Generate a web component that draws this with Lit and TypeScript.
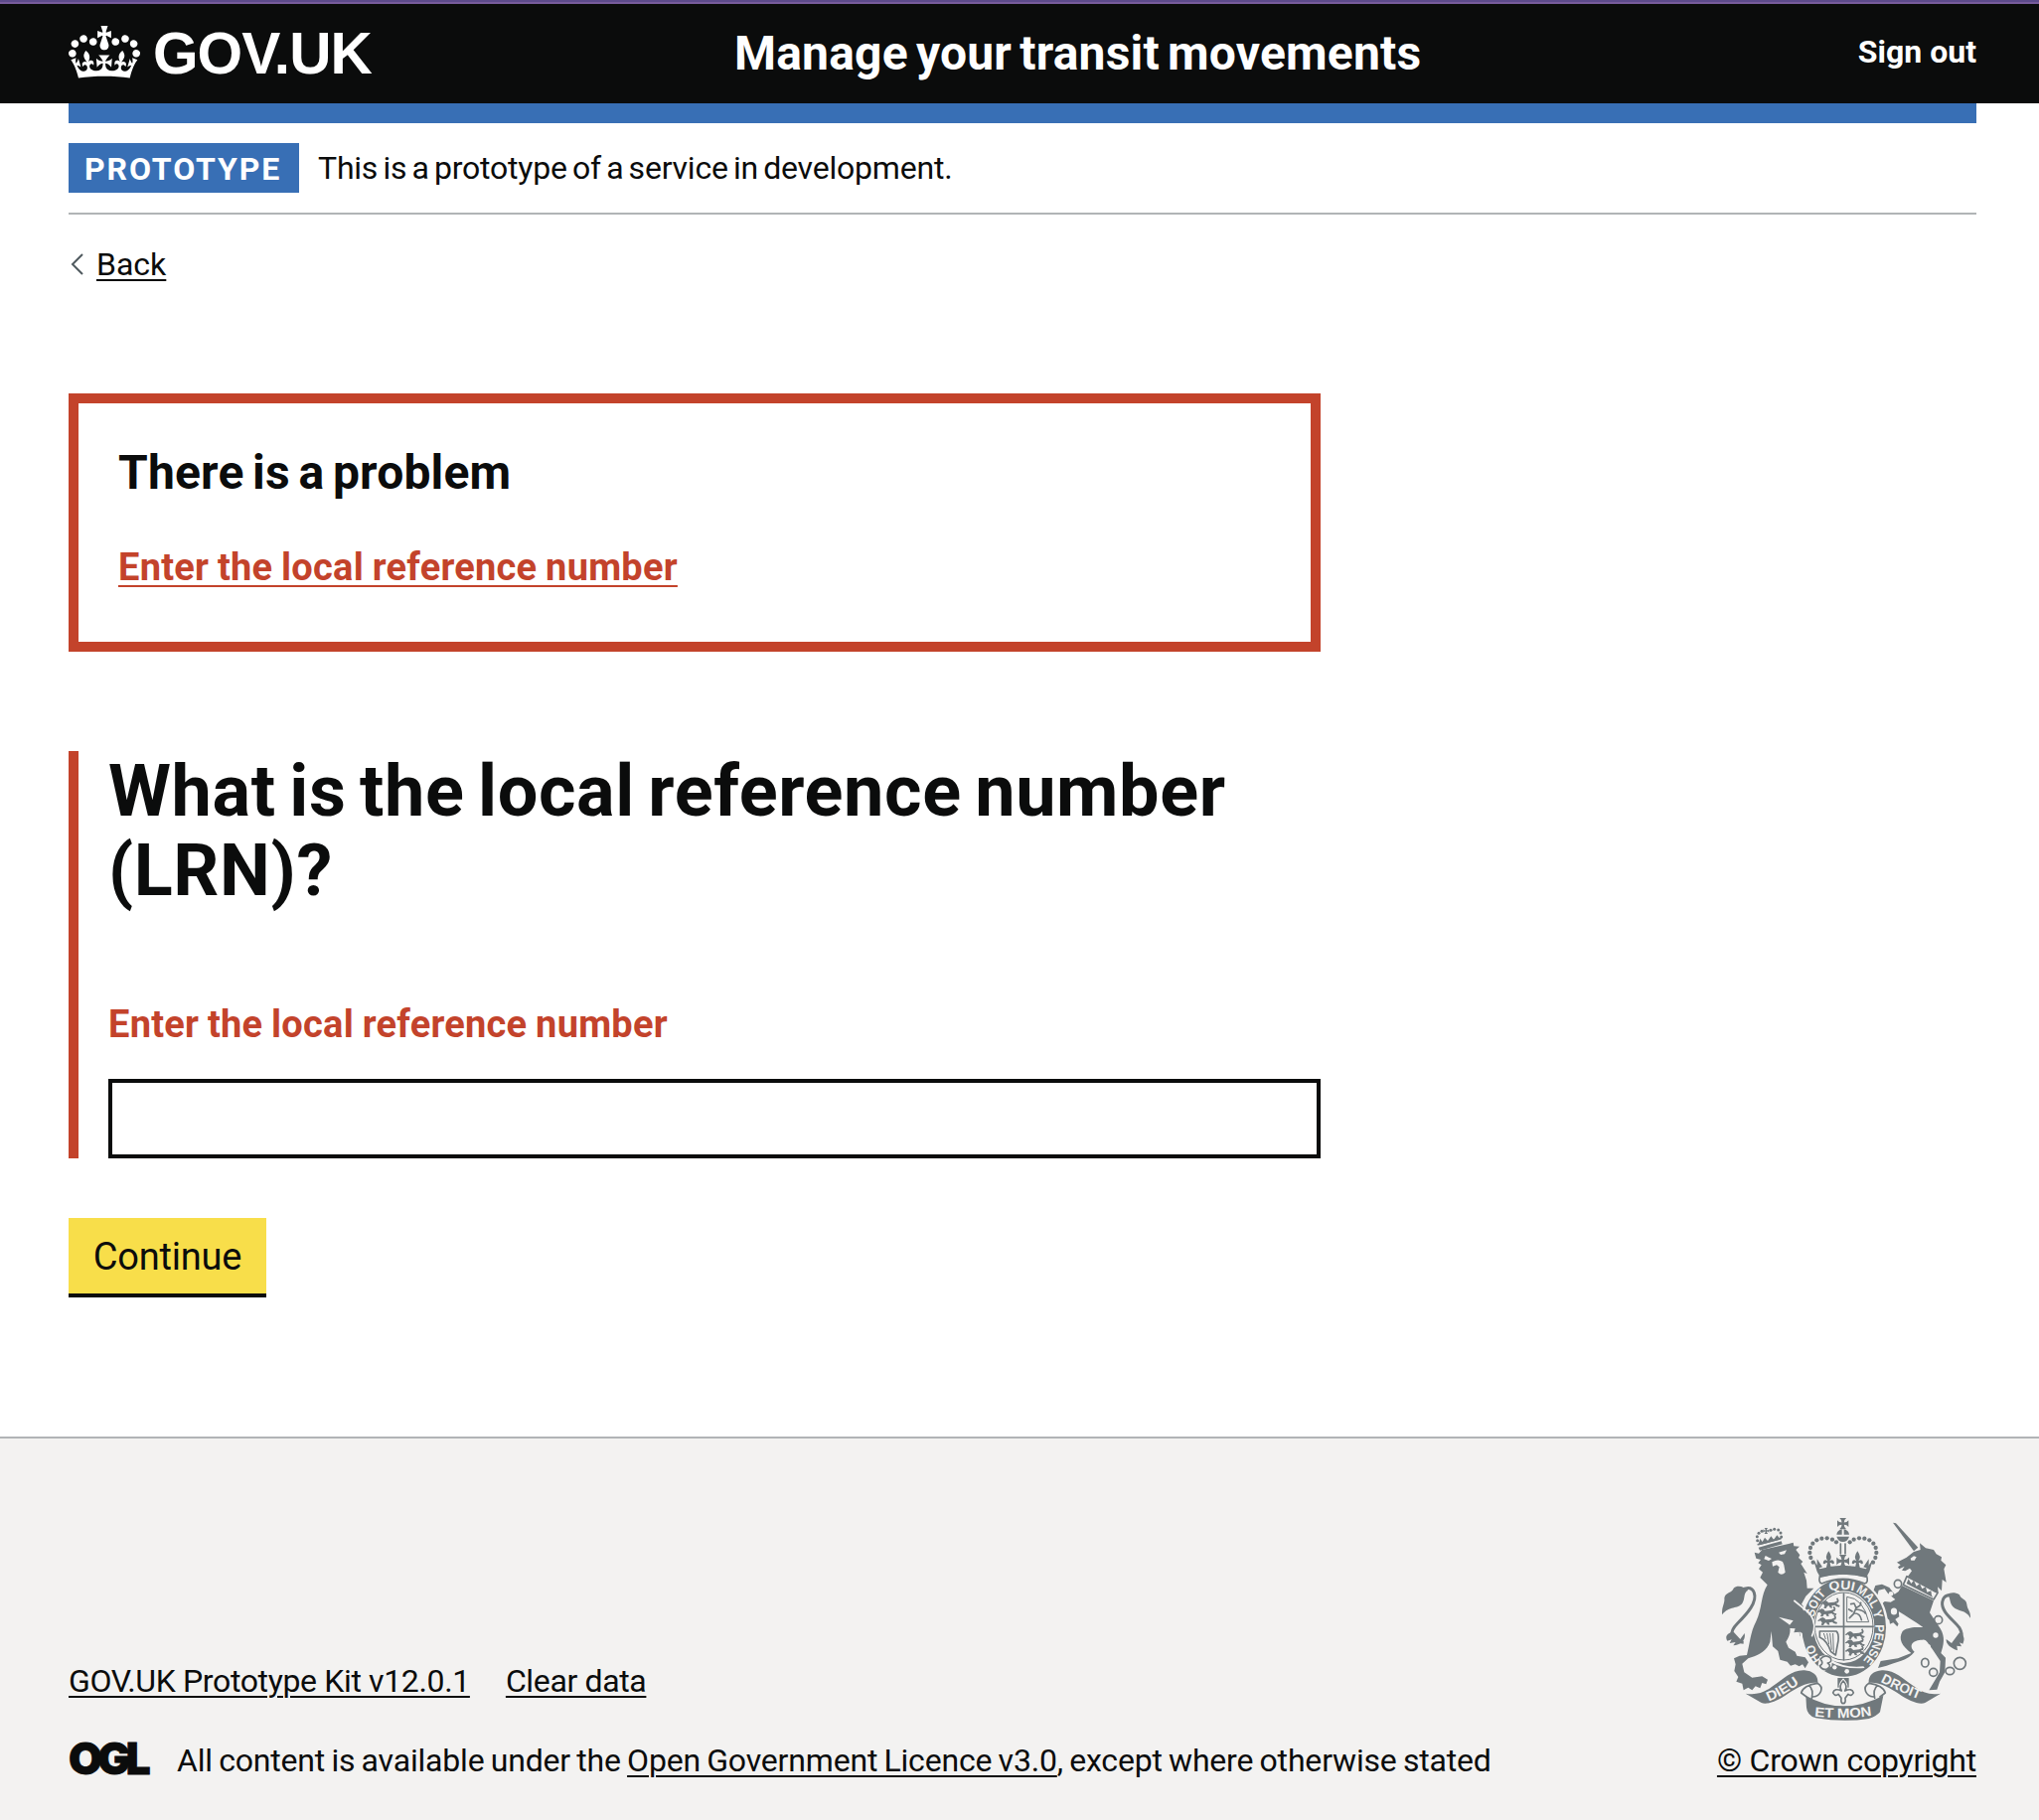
import { LitElement, html, css, svg } from "lit";
import { customElement } from "lit/decorators.js";

const CROWN =
  "M25 30.2c3.5 1.5 7.7-.2 9.1-3.7 1.5-3.6-.2-7.8-3.9-9.2-3.6-1.4-7.6.3-9.1 3.9-1.4 3.5.3 7.5 3.9 9zM9 39.5c3.6 1.5 7.8-.2 9.2-3.7 1.5-3.6-.2-7.8-3.9-9.1-3.6-1.5-7.6.2-9.1 3.8-1.4 3.5.3 7.5 3.8 9zM4.4 57.2c3.5 1.5 7.7-.2 9.1-3.8 1.5-3.6-.2-7.7-3.9-9.1-3.5-1.5-7.6.3-9.1 3.8-1.4 3.5.3 7.6 3.9 9.1zm38.3-21.4c3.5 1.5 7.7-.2 9.1-3.8 1.5-3.6-.2-7.7-3.9-9.1-3.6-1.5-7.6.3-9.1 3.8-1.3 3.6.4 7.7 3.9 9.1zm64.4-5.6c-3.6 1.5-7.8-.2-9.1-3.7-1.5-3.6.2-7.8 3.8-9.2 3.6-1.4 7.7.3 9.2 3.9 1.3 3.5-.4 7.5-3.9 9zm15.9 9.3c-3.6 1.5-7.7-.2-9.1-3.7-1.5-3.6.2-7.8 3.7-9.1 3.6-1.5 7.7.2 9.2 3.8 1.5 3.5-.3 7.5-3.8 9zm4.7 17.7c-3.6 1.5-7.8-.2-9.2-3.8-1.5-3.6.2-7.7 3.9-9.1 3.6-1.5 7.7.3 9.2 3.8 1.3 3.5-.4 7.6-3.9 9.1zM89.3 35.8c-3.6 1.5-7.8-.2-9.2-3.8-1.4-3.6.2-7.7 3.9-9.1 3.6-1.5 7.7.3 9.2 3.8 1.4 3.6-.3 7.7-3.9 9.1zM69.7 17.7l8.9 4.7V9.3l-8.9 2.8c-.2-.3-.5-.6-.9-.9L72.4 0H59.6l3.5 11.2c-.3.3-.6.5-.9.9l-8.8-2.8v13.1l8.8-4.7c.3.3.6.7.9.9l-5 15.4v.1c-.2.8-.4 1.6-.4 2.4 0 4.1 3.1 7.5 7 8.1h.2c.3 0 .7.1 1 .1.4 0 .7 0 1-.1h.2c4-.6 7.1-4.1 7.1-8.1 0-.8-.1-1.7-.4-2.4V34l-5.1-15.4c.4-.2.7-.6 1-.9zM66 92.8c16.9 0 32.8 1.1 47.1 3.2 4-16.9 8.9-26.7 14-33.5l-9.6-3.4c1 4.9 1.1 7.2 0 10.2-1.5-1.4-3-4.3-4.2-8.7L108.6 76c2.8-2 5-3.2 7.5-3.3-4.4 9.4-10 11.9-13.6 11.2-4.3-.8-6.3-4.6-5.6-7.9 1-4.7 5.7-5.9 8-.5 4.3-8.7-3-11.4-7.6-8.8 7.1-7.2 7.9-13.5 2.1-21.1-8 6.1-8.1 12.3-4.5 20.8-4.7-5.4-12.1-2.5-9.5 6.2 3.4-5.2 7.9-2 7.2 3.1-.6 4.3-6.4 7.8-13.5 7.2-10.3-.9-10.9-8-11.2-13.8 2.5-.5 7.1 1.8 11 7.3L80.2 60c-4.1 4.4-8 5.3-12.3 5.4 1.4-4.4 8-11.6 8-11.6H55.5s6.4 7.2 7.9 11.6c-4.2-.1-8-1-12.3-5.4l1.4 16.4c3.9-5.5 8.5-7.7 10.9-7.3-.3 5.8-.9 12.8-11.1 13.8-7.2.6-12.9-2.9-13.5-7.2-.7-5 3.8-8.3 7.1-3.1 2.7-8.7-4.6-11.6-9.4-6.2 3.7-8.5 3.6-14.7-4.6-20.8-5.8 7.6-5 13.9 2.2 21.1-4.7-2.6-11.9.1-7.7 8.8 2.3-5.5 7.1-4.2 8.1.5.7 3.3-1.3 7.1-5.7 7.9-3.5.7-9-1.8-13.5-11.2 2.5.1 4.7 1.3 7.5 3.3l-4.7-15.4c-1.2 4.4-2.7 7.2-4.3 8.7-1.1-3-.9-5.3 0-10.2l-9.5 3.4c5 6.9 9.9 16.7 14 33.5 14.8-2.1 30.8-3.2 47.7-3.2z";

/* Pearls of the royal crown's two arches, as x,y pairs. */
const PEARLS: [number, number][] = [
  [344, 188], [337, 174], [334, 159], [336, 144], [343, 131], [355, 121], [370, 116], [386, 115], [402, 119], [414, 127],
  [525, 188], [532, 174], [535, 159], [533, 144], [526, 131], [514, 121], [499, 116], [483, 115], [467, 119], [455, 127],
];

/* Pearls of the small crown on the lion's head. */
const SMALL_PEARLS: [number, number][] = [
  [176, 122], [175, 110], [180, 100], [189, 94], [216, 91], [227, 88], [239, 90], [246, 99], [248, 111],
];

@customElement("royal-arms")
export class RoyalArms extends LitElement {
  static styles = css`
    :host { display: block; }
    svg { display: block; width: 250px; height: 204px; }
    .ink { fill: #70787c; }
    .bg { fill: #f3f2f1; }
    .line { fill: none; stroke: #70787c; stroke-width: 5; stroke-linejoin: round; stroke-linecap: round; }
    .fine { fill: none; stroke: #70787c; stroke-width: 3; }
    .tail { fill: none; stroke: #70787c; stroke-width: 9; }
    .gap { fill: none; stroke: #f3f2f1; stroke-width: 5; }
    .motto { fill: #f3f2f1; font: 700 41px "Liberation Sans", sans-serif; }
    .garter { fill: #f3f2f1; font: 700 38px "Liberation Sans", sans-serif; }
  `;

  private passant(x: number, y: number) {
    return svg`<path class="ink" transform="translate(${x} ${y})"
      d="M0 3l7-3 6 3 3 4 18-2 9-4-3-6 4-3 4 8-2 7-6 1 4 5 7 2-2 5-9-2-4-4-10 2 2 7-7-1-3-6-5 1-4 7-7-1 3-7-5-6-5 2-4-2 3-2z"/>`;
  }

  private cross(x: number, y: number, r: number) {
    return svg`<path class="ink" transform="translate(${x} ${y}) scale(${r / 10})"
      d="M-2-2Q-2-7-6-10H6Q2-7 2-2Q7-2 10-6V6Q7 2 2 2Q2 7 6 10H-6Q-2 7-2 2Q-7 2-10 6V-6Q-7-2-2-2Z"/>`;
  }

  render() {
    return html`<svg viewBox="69 54 750 612" role="img" aria-label="Royal coat of arms">
      <path class="tail" d="M134 430C92 428 88 400 116 372C146 342 176 308 166 280C158 258 138 266 124 274"/>
      <path class="ink" d="M69 346C68 320 78 312 76 296C78 278 100 280 104 266C118 254 136 264 148 272C132 280 140 296 130 312C116 330 92 318 69 346Z"/>
      <path class="ink" d="M104 398C82 402 78 412 85 425L98 421L92 432L110 429L103 439C124 438 142 424 137 402L124 420Z"/>
      <path class="tail" d="M772 432C794 426 798 408 786 386C768 362 730 338 734 308C738 284 758 284 770 292"/>
      <path class="ink" d="M819 356C820 334 810 332 808 314C806 298 790 300 786 286C770 276 756 280 748 286C760 292 754 308 766 322C782 338 804 330 819 356Z"/>
      <path class="ink" d="M786 400C802 410 802 422 796 434L786 430L792 442L778 440L780 454C760 448 744 434 746 420L762 432Z"/>

      <path class="ink" d="M167 158L180 161L190 150L270 132L284 128L286 139L303 140L292 150L304 166L300 174L313 186L307 192L326 222L316 218L324 242L326 266L346 266L322 290L309 314L340 352C352 380 344 398 336 412L328 402L322 414L312 402L304 412L302 398L286 400L290 388L266 386L284 364L240 353L272 376C276 392 277 404 262 428L270 446L290 458L295 470L320 475L330 490L320 508L312 496L302 502L290 496L276 500L266 488L244 482L238 456L222 442L218 396L214 428C204 458 176 470 148 478L130 494L136 520L160 536L190 532L207 542L202 556L190 552L184 568L170 562L160 574L148 566L134 574L130 554L112 548L118 534L106 516L110 496L105 478L122 470L144 468C154 430 154 400 172 366C190 330 186 286 206 256L184 234L192 218L180 208L188 196L178 190L186 180L172 176Z"/>
      <path class="bg" d="M200 168L219 177L210 183L196 178ZM240 158L264 151L258 163L246 165ZM220 187Q238 176 252 186L256 196L260 218Q248 230 238 218L242 202L234 196L222 200Z"/>
      <path class="ink" d="M179 143L248 124L251 133L183 152Z"/>
      <path class="line" d="M178 134L246 116"/>
      <path class="ink" d="M180 130L184 116L191 126L198 113L207 123L217 109L225 119L235 106L244 116L244 119L182 136Z"/>
      ${SMALL_PEARLS.map(([x, y]) => svg`<circle class="ink" cx=${x} cy=${y} r="4.5"/>`)}
      ${this.cross(202, 93, 9)}

      <path class="ink" d="M585 68L594 70L661 143L648 154Z"/>
      <path class="ink" d="M597 188L626 173L648 156L668 150L666 130L684 145L708 150L716 163L732 172L730 182L745 196L739 208L746 248L734 240L732 274L720 262L722 280L712 278L630 230L642 214L636 206L622 214L612 212L620 200L604 208L600 202L608 196Z"/>
      <path class="bg" d="M638 176L648 169L656 172L650 182L640 182Z"/>
      <path class="line" d="M627 230L720 280L708 300L616 256Z"/>
      <path class="ink" d="M632 238L640 252L648 242L656 260L666 252L673 268L684 262L688 278L700 274L702 288L706 294L626 252Z"/>
      <path class="ink" d="M612 258L708 304L696 340L728 388C744 414 738 438 730 462L744 476L742 520L726 548L718 572L694 574L712 544L726 520L728 486L704 450C690 434 688 420 674 422C646 422 630 438 650 458C630 486 592 488 566 500L540 507L548 486L600 478L640 462C612 440 600 420 614 396C630 382 658 384 676 384C650 366 624 350 602 336L604 352L592 360L602 374L598 382L586 370L576 374L574 362L556 348L558 336L544 334L546 318L560 306L578 308L592 300L570 282L560 268L542 272L538 288L526 274L532 258L552 254L574 264L590 284L602 276Z"/>

      <ellipse class="bg" cx="437" cy="385" rx="134" ry="153"/>
      <ellipse class="ink" cx="437" cy="385" rx="127" ry="148"/>
      <ellipse class="bg" cx="437" cy="383" rx="92" ry="109"/>
      <ellipse class="fine" cx="437" cy="381" rx="88" ry="102"/>
      <path id="garter-left" fill="none" d="M368 482C352 464 346 440 344 410"/>
      <path id="garter-soit" fill="none" d="M348 354C352 322 366 298 388 281"/>
      <path id="garter-qui" fill="none" d="M394 275Q431 264 470 275"/>
      <path id="garter-mal" fill="none" d="M472 277C504 292 522 318 531 362"/>
      <path id="garter-pense" fill="none" d="M531 376C534 416 522 458 490 490"/>
      <text class="garter"><textPath href="#garter-soit" textLength="80" lengthAdjust="spacingAndGlyphs">SOIT</textPath></text>
      <text class="garter"><textPath href="#garter-qui" textLength="74" lengthAdjust="spacingAndGlyphs">QUI</textPath></text>
      <text class="garter"><textPath href="#garter-mal" textLength="104" lengthAdjust="spacingAndGlyphs">MAL Y</textPath></text>
      <text class="garter"><textPath href="#garter-pense" textLength="118" lengthAdjust="spacingAndGlyphs">PENSE</textPath></text>
      <text class="garter"><textPath href="#garter-left" textLength="52" lengthAdjust="spacingAndGlyphs">HO</textPath></text>
      <path class="ink" d="M366 484Q430 520 506 500Q476 532 430 528L372 508Z"/>
      <path class="bg" d="M396 480Q436 508 496 502L500 507Q436 512 394 488Z"/>
      <circle class="bg" cx="409" cy="505" r="6.5"/><circle class="bg" cx="446" cy="517" r="7"/>
      <path class="bg" d="M364 472Q386 462 402 480L400 502L378 516L358 504Z"/>
      <path class="line" d="M366 480Q380 464 396 476Q404 488 388 492Q402 502 386 510Q370 514 364 500Q378 494 366 480Z"/>
      <path class="line" d="M347 382H525M436.500 282V482"/>
      ${this.passant(374, 303)}${this.passant(364, 328)}${this.passant(366, 354)}
      ${this.passant(449, 396)}${this.passant(449, 421)}${this.passant(449, 446)}
      <path class="fine" d="M446 292Q496 296 512 368H446Z"/>
      <path class="line" d="M458 314L468 312L474 326L466 344L454 356M474 326L486 318L488 310M474 330Q496 332 502 342M470 342Q486 342 490 362M452 330L462 336"/>
      <path class="line" d="M364 396L414 396Q422 402 420 424L412 468L398 458Q386 424 364 414Z"/>
      <path class="fine" d="M376 402L382 420M386 402L392 436M395 402L400 452M404 402L406 460"/>

      <path class="gap" d="M286 303L334 342C350 366 352 388 340 412"/>
      <path class="ink" d="M300 320L330 344C346 368 346 388 337 410L328 402L322 412L312 402L300 396Z"/>
      <g class="line">
        <ellipse cx="600" cy="253" rx="11" ry="12"/><ellipse class="bg" cx="588" cy="336" rx="12" ry="13"/>
        <circle cx="722" cy="362" r="12"/><ellipse cx="682" cy="491" rx="11" ry="13"/>
        <circle cx="707" cy="520" r="12"/><ellipse cx="757" cy="516" rx="13" ry="11"/><circle cx="787" cy="493" r="18"/>
      </g>
      <circle class="bg" cx="714" cy="408" r="8"/><circle class="bg" cx="691" cy="443" r="8"/>
      <circle class="bg" cx="579" cy="283" r="7"/>

      ${PEARLS.map(([x, y]) => svg`<circle class="ink" cx=${x} cy=${y} r="6.4"/>`)}
      ${this.cross(434, 71, 17)}
      <path class="ink" d="M431 88V104H415Q416 92 431 88ZM437 88Q452 92 453 104H437ZM415 110H453Q448 126 434 126Q420 126 415 110Z"/>
      <path class="line" d="M427 132V162M441 132V162"/>
      <path class="ink" d="M345 180L364 208Q434 186 504 208L524 180L514 216L504 234Q434 214 366 234L356 216Z"/>
      ${this.cross(434, 184, 19)}
      <g id="lis"><path class="ink" d="M391 154Q404 172 394 184Q406 176 408 190Q404 196 399 189L395 190L399 208H383L387 190L383 189Q378 196 374 190Q376 176 388 184Q378 172 391 154Z"/></g>
      <use href="#lis" x="87"/>
      <path class="ink" d="M356 178L372 202L356 208ZM512 178L496 202L512 208ZM410 200H458L470 208H398Z"/>
      <path class="line" d="M364 230Q360 250 370 252Q434 224 500 252Q512 248 506 230Q434 214 364 230Z"/>

      <path class="ink" d="M418 537H452V566H418Z"/>
      <path class="bg" d="M435 538Q456 560 444 574Q466 564 468 584Q464 594 452 590Q448 600 442 604H428Q422 600 418 590Q406 594 402 584Q404 564 426 574Q414 560 435 538Z"/>
      <path class="line" d="M435 546Q450 562 440 576Q462 566 466 582Q460 594 450 586L441 598Q443 614 435 614Q427 614 429 598L420 586Q410 594 404 582Q408 566 430 576Q420 562 435 546Z"/>

      <path class="ink" d="M140 584C170 590 196 582 222 562C256 540 280 512 318 514C344 516 360 530 358 552C328 548 296 566 266 586C238 606 204 620 188 612Z"/>
      <path class="ink" d="M729 584C700 590 674 582 648 562C614 540 590 512 552 514C526 516 510 530 512 552C542 548 574 566 604 586C632 606 666 620 682 612Z"/>
      <path class="ink" d="M322 590Q376 622 436 622Q496 622 556 590L546 640Q534 654 512 660Q436 672 352 658Q326 650 324 626Z"/>
      <path class="line" d="M357 553C380 566 366 592 344 594M357 553C330 556 312 568 308 582L324 594M332 560Q346 572 340 598"/>
      <path class="line" d="M513 553C490 566 504 592 526 594M513 553C540 556 558 568 562 582L546 594M538 560Q524 572 530 598"/>
      <path id="scroll-l" fill="none" d="M210 608Q260 588 312 546"/>
      <path id="scroll-c" fill="none" d="M348 653Q436 663 524 650"/>
      <path id="scroll-r" fill="none" d="M547 548Q604 578 666 602"/>
      <text class="motto"><textPath href="#scroll-l" textLength="108" lengthAdjust="spacingAndGlyphs">DIEU</textPath></text>
      <text class="motto"><textPath href="#scroll-c" textLength="174" lengthAdjust="spacingAndGlyphs">ET MON</textPath></text>
      <text class="motto"><textPath href="#scroll-r" textLength="128" lengthAdjust="spacingAndGlyphs">DROIT</textPath></text>
    </svg>`;
  }
}

@customElement("app-root")
export class AppRoot extends LitElement {
  static styles = css`
    :host {
      display: block;
      min-height: 1832px;
      background: #fff;
      color: #0b0c0c;
      font: 400 32px/40px Roboto, "Liberation Sans", sans-serif;
    }
    * { box-sizing: border-box; }
    h1, h2, p { margin: 0; }
    a {
      color: inherit;
      text-decoration: underline;
      text-decoration-thickness: 2px;
      text-underline-offset: 4px;
    }
    .strip { height: 4px; background: linear-gradient(#5d4b8b 50%, #785c9c 50%); }
    .header {
      display: flex;
      align-items: center;
      height: 100px;
      padding: 0 63px 0 69px;
      background: #0b0c0c;
      color: #fff;
    }
    .logo { display: flex; align-items: center; width: 670px; }
    .crown { display: block; width: 72px; height: 53px; margin: 0 13px 4px 0; fill: #fff; }
    .logotype { font: 700 58.6px/60px "Liberation Sans", Arial, sans-serif; letter-spacing: -1px; }
    .service {
      flex: 1;
      font-size: 48px;
      line-height: 60px;
      font-weight: 700;
      letter-spacing: 0.2px;
      word-spacing: -4px;
    }
    .signout { font-weight: 700; text-decoration: none; padding-bottom: 4px; }
    .container { margin: 0 63px 0 69px; }
    .bar { height: 20px; background: #386fb5; }
    .phase {
      display: flex;
      gap: 19px;
      padding: 20px 0;
      border-bottom: 2px solid #b1b4b6;
      line-height: 50px;
      letter-spacing: -0.21px;
      word-spacing: -2.5px;
    }
    .tag {
      width: 232px;
      height: 50px;
      padding: 1px 0 0 16px;
      background: #386fb5;
      color: #fff;
      font-weight: 700;
      letter-spacing: 1.9px;
    }
    .back { display: flex; align-items: center; margin-top: 30px; height: 40px; }
    .chevron { display: block; width: 14px; height: 24px; margin: 0 12px 0 2px; }
    .main { width: 1260px; }
    .summary {
      height: 260px;
      margin-top: 110px;
      padding: 40px;
      border: 10px solid #c3432b;
    }
    .summary-title {
      font-size: 48px;
      line-height: 60px;
      letter-spacing: 0.18px;
      word-spacing: -3.5px;
      margin-bottom: 40px;
    }
    .error {
      color: #c3432b;
      font-size: 38px;
      line-height: 50px;
      font-weight: 700;
      letter-spacing: 0.25px;
      word-spacing: -1px;
    }
    .error a { text-underline-offset: 5px; }
    .group { margin-top: 100px; padding-left: 30px; border-left: 10px solid #c3432b; }
    .question {
      font-size: 72px;
      line-height: 80px;
      letter-spacing: 0.62px;
      word-spacing: -5px;
      padding-top: 1px;
      margin-bottom: 89px;
    }
    .input {
      display: block;
      width: 100%;
      height: 80px;
      margin-top: 30px;
      border: 4px solid #0b0c0c;
      border-radius: 0;
      background: #fff;
    }
    .button {
      display: block;
      width: 199px;
      height: 80px;
      margin-top: 60px;
      padding: 2px 0 0;
      border: 0;
      border-bottom: 4px solid #0b0c0c;
      background: #f8de4a;
      color: #0b0c0c;
      font: 400 38px/74px Roboto, "Liberation Sans", sans-serif;
      letter-spacing: -0.2px;
    }
    .footer {
      display: flex;
      justify-content: space-between;
      align-items: flex-end;
      height: 386px;
      margin-top: 140px;
      padding: 0 63px 40px 69px;
      border-top: 2px solid #b1b4b6;
      background: #f3f2f1;
    }
    .links { display: flex; gap: 36px; margin-bottom: 40px; letter-spacing: -0.36px; }
    .licence { display: flex; letter-spacing: -0.18px; word-spacing: -1.5px; }
    .ogl {
      width: 109px;
      font: 900 44px/36px Inter, "Liberation Sans", sans-serif;
      letter-spacing: -4.8px;
      -webkit-text-stroke: 0.8px #0b0c0c;
    }
    .copyright { display: flex; flex-direction: column; align-items: center; gap: 20px; letter-spacing: -0.23px; }
  `;

  render() {
    return html`
      <div class="strip"></div>
      <header class="header">
        <div class="logo">
          <svg class="crown" viewBox="0 0 132 97" aria-hidden="true"><path d=${CROWN} /></svg>
          <span class="logotype">GOV.UK</span>
        </div>
        <div class="service">Manage your transit movements</div>
        <a class="signout">Sign out</a>
      </header>
      <div class="container">
        <div class="bar"></div>
        <div class="phase">
          <strong class="tag">PROTOTYPE</strong>
          <span>This is a prototype of a service in development.</span>
        </div>
        <div class="back">
          <svg class="chevron" viewBox="0 0 14 24" aria-hidden="true">
            <path d="M12 2L2 12L12 22" fill="none" stroke="#505a5f" stroke-width="2" />
          </svg>
          <a>Back</a>
        </div>
        <main class="main">
          <div class="summary">
            <h2 class="summary-title">There is a problem</h2>
            <div class="error"><a>Enter the local reference number</a></div>
          </div>
          <div class="group">
            <h1 class="question">What is the local reference number (LRN)?</h1>
            <p class="error">Enter the local reference number</p>
            <input class="input" type="text" aria-label="Local reference number" />
          </div>
          <button class="button">Continue</button>
        </main>
      </div>
      <footer class="footer">
        <div>
          <div class="links"><a>GOV.UK Prototype Kit v12.0.1</a><a>Clear data</a></div>
          <div class="licence">
            <span class="ogl">OGL</span>
            <span>All content is available under the <a>Open Government Licence v3.0</a>, except where otherwise stated</span>
          </div>
        </div>
        <div class="copyright">
          <royal-arms></royal-arms>
          <a>© Crown copyright</a>
        </div>
      </footer>
    `;
  }
}
